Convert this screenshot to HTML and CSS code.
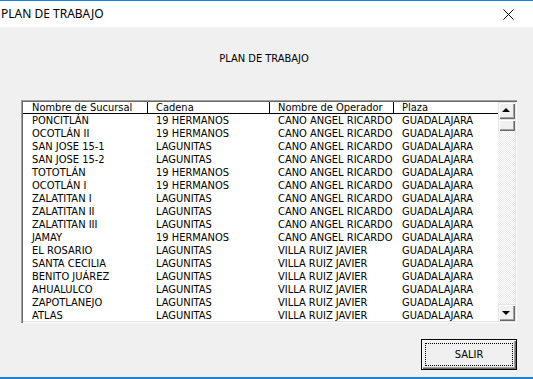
FILE: index.html
```html
<!DOCTYPE html>
<html lang="es">
<head>
    <meta charset="UTF-8">
    <title>PLAN DE TRABAJO</title>
    <link rel="stylesheet" href="styles.css">
</head>
<body>
    <div class="window">
        <div class="titlebar">
            <span class="title">PLAN DE TRABAJO</span>
            <svg class="close" width="11" height="11" viewBox="0 0 11 11">
                <path d="M0.5 0.5 L10.5 10.5 M10.5 0.5 L0.5 10.5" stroke="#000" stroke-width="1" fill="none"/>
            </svg>
        </div>
        <div class="client">
            <div class="caption">PLAN DE TRABAJO</div>
            <div class="listbox">
                <div class="list">
                    <div class="row head">
                        <span>Nombre de Sucursal</span>
                        <span>Cadena</span>
                        <span>Nombre de Operador</span>
                        <span>Plaza</span>
                    </div>
                    <div class="row"><span>PONCITLÁN</span><span>19 HERMANOS</span><span>CANO ANGEL RICARDO</span><span>GUADALAJARA</span></div>
                    <div class="row"><span>OCOTLÁN II</span><span>19 HERMANOS</span><span>CANO ANGEL RICARDO</span><span>GUADALAJARA</span></div>
                    <div class="row"><span>SAN JOSE 15-1</span><span>LAGUNITAS</span><span>CANO ANGEL RICARDO</span><span>GUADALAJARA</span></div>
                    <div class="row"><span>SAN JOSE 15-2</span><span>LAGUNITAS</span><span>CANO ANGEL RICARDO</span><span>GUADALAJARA</span></div>
                    <div class="row"><span>TOTOTLÁN</span><span>19 HERMANOS</span><span>CANO ANGEL RICARDO</span><span>GUADALAJARA</span></div>
                    <div class="row"><span>OCOTLÁN I</span><span>19 HERMANOS</span><span>CANO ANGEL RICARDO</span><span>GUADALAJARA</span></div>
                    <div class="row"><span>ZALATITAN I</span><span>LAGUNITAS</span><span>CANO ANGEL RICARDO</span><span>GUADALAJARA</span></div>
                    <div class="row"><span>ZALATITAN II</span><span>LAGUNITAS</span><span>CANO ANGEL RICARDO</span><span>GUADALAJARA</span></div>
                    <div class="row"><span>ZALATITAN III</span><span>LAGUNITAS</span><span>CANO ANGEL RICARDO</span><span>GUADALAJARA</span></div>
                    <div class="row"><span>JAMAY</span><span>19 HERMANOS</span><span>CANO ANGEL RICARDO</span><span>GUADALAJARA</span></div>
                    <div class="row"><span>EL ROSARIO</span><span>LAGUNITAS</span><span>VILLA RUIZ JAVIER</span><span>GUADALAJARA</span></div>
                    <div class="row"><span>SANTA CECILIA</span><span>LAGUNITAS</span><span>VILLA RUIZ JAVIER</span><span>GUADALAJARA</span></div>
                    <div class="row"><span>BENITO JUÁREZ</span><span>LAGUNITAS</span><span>VILLA RUIZ JAVIER</span><span>GUADALAJARA</span></div>
                    <div class="row"><span>AHUALULCO</span><span>LAGUNITAS</span><span>VILLA RUIZ JAVIER</span><span>GUADALAJARA</span></div>
                    <div class="row"><span>ZAPOTLANEJO</span><span>LAGUNITAS</span><span>VILLA RUIZ JAVIER</span><span>GUADALAJARA</span></div>
                    <div class="row"><span>ATLAS</span><span>LAGUNITAS</span><span>VILLA RUIZ JAVIER</span><span>GUADALAJARA</span></div>
                </div>
                <div class="scrollbar">
                    <div class="sb-btn up"></div>
                    <div class="sb-thumb"></div>
                    <div class="sb-track"></div>
                    <div class="sb-btn down"></div>
                </div>
            </div>
            <div class="actions">
                <button class="btn">SALIR</button>
            </div>
        </div>
    </div>
</body>
</html>
```

FILE: styles.css
```css
* {
    box-sizing: border-box;
}
body {
    margin: 0;
    background: #f0f0f0;
    font-family: "DejaVu Sans Condensed", "Liberation Sans", sans-serif;
    font-size: 11px;
    color: #000;
}
.window {
    width: 533px;
    height: 379px;
    display: flex;
    flex-direction: column;
    background: #f0f0f0;
    border-top: 1px solid #1883d7;
    border-bottom: 2px solid #1883d7;
}
.titlebar {
    height: 26px;
    background: #fff;
    display: flex;
    align-items: center;
    justify-content: space-between;
    padding: 0 19px 0 1px;
}
.title {
    font-family: "Noto Sans", sans-serif;
    font-size: 12px;
    margin-top: -1px;
}
.close {
    display: block;
    margin-top: 1px;
}
.client {
    flex: 1;
    display: flex;
    flex-direction: column;
}
.caption {
    text-align: center;
    line-height: 13px;
    margin-top: 25px;
    padding-right: 5px;
}
.listbox {
    margin: 35px 0 0 21px;
    width: 496px;
    height: 223px;
    background: #fff;
    display: flex;
    padding: 2px;
    box-shadow: inset 1px 1px #a0a0a0, inset 2px 2px #696969, inset -1px -1px #fff, inset -2px -2px #e3e3e3;
}
.list {
    flex: 1;
    overflow: hidden;
}
.row {
    display: grid;
    grid-template-columns: 124px 122px 124px 1fr;
    height: 13px;
    line-height: 13px;
    white-space: nowrap;
}
.row span {
    padding-left: 9px;
    overflow: hidden;
}
.row.head {
    height: 12px;
    line-height: 11px;
    border-bottom: 1px solid #000;
}
.row.head span + span {
    box-shadow: inset 1px 0 #000;
}
.scrollbar {
    width: 17px;
    display: flex;
    flex-direction: column;
}
.sb-btn, .sb-thumb {
    background: #f0f0f0;
    box-shadow: inset 1px 1px #e3e3e3, inset 2px 2px #fff, inset -1px -1px #696969, inset -2px -2px #a0a0a0;
}
.sb-btn {
    height: 17px;
    display: flex;
    align-items: center;
    justify-content: center;
}
.sb-btn::before {
    content: "";
    border-left: 4px solid transparent;
    border-right: 4px solid transparent;
}
.sb-btn.up::before {
    border-bottom: 4px solid #000;
    margin: -1px 1px 0 0;
}
.sb-btn.down::before {
    border-top: 4px solid #000;
    margin: 0 1px 0 0;
}
.sb-thumb {
    height: 12px;
}
.sb-track {
    flex: 1;
    background: repeating-conic-gradient(#fff 0 25%, #e9e9e9 0 50%) 0 0 / 2px 2px;
}
.actions {
    display: flex;
    justify-content: flex-end;
    padding-right: 16px;
    margin-top: 16px;
}
.btn {
    position: relative;
    width: 96px;
    height: 31px;
    font-family: inherit;
    font-size: 11px;
    color: #000;
    background: #f0f0f0;
    border: 1px solid #000;
    box-shadow: inset 1px 1px #fff, inset -1px -1px #696969, inset -2px -2px #a0a0a0;
    padding: 0;
}
.btn::after {
    content: "";
    position: absolute;
    inset: 3px;
    border: 1px dotted #000;
}
```
